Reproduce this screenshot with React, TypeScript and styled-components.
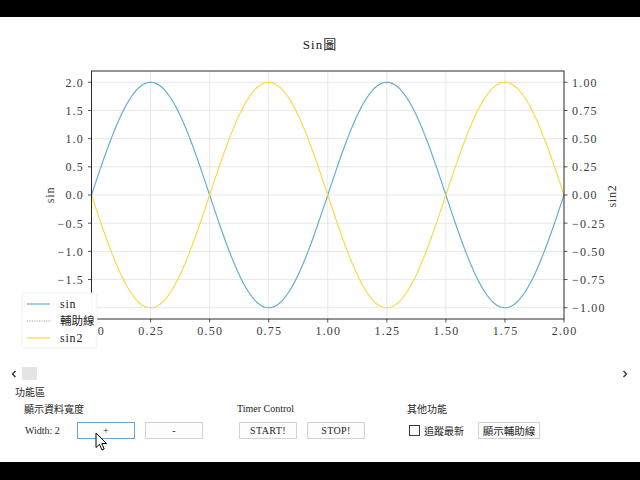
import React from "react";
import styled, { createGlobalStyle } from "styled-components";

const GlobalStyle = createGlobalStyle`
  html, body { margin: 0; padding: 0; background: #fff; }
  body { font-family: "Liberation Serif", "Noto Sans CJK TC", serif; }
`;

const Screen = styled.div`
  position: relative;
  width: 640px;
  height: 480px;
  display: flex;
  flex-direction: column;
  background: #fff;
  overflow: hidden;
`;

const BlackBar = styled.div<{ $h: number }>`
  height: ${(p) => p.$h}px;
  flex: none;
  background: #000;
`;

const ChartArea = styled.div`
  height: 349px;
  flex: none;
`;

const ScrollRow = styled.div`
  height: 16px;
  flex: none;
  display: flex;
  align-items: center;
  padding: 0 11px 0 10px;
`;

const ArrowBox = styled.div`
  width: 8px;
  height: 10px;
  display: flex;
  align-items: center;
  justify-content: center;
`;

const Thumb = styled.div`
  width: 15px;
  height: 13px;
  margin-left: 4px;
  margin-top: -1px;
  background: #e4e4e4;
`;

const Spacer = styled.div`
  flex: 1;
`;

const Panel = styled.div`
  flex: 1;
  padding: 3px 0 0 15px;
  color: #1e1e1e;
`;

const CjkText = styled.div`
  font-family: "Noto Sans CJK TC", sans-serif;
  font-size: 10px;
  line-height: 14px;
  height: 14px;
`;

const Groups = styled.div`
  display: flex;
  padding-left: 9px;
  margin-top: 3px;
`;

const Group = styled.div<{ $w?: number }>`
  width: ${(p) => (p.$w ? `${p.$w}px` : "auto")};
  flex: none;
  display: flex;
  flex-direction: column;
`;

const GroupTitleLatin = styled.div`
  font-family: "Liberation Serif", serif;
  font-size: 10px;
  line-height: 14px;
  height: 14px;
`;

const Row = styled.div<{ $indent?: number }>`
  display: flex;
  align-items: center;
  height: 17px;
  margin-top: 6px;
  padding-left: ${(p) => p.$indent ?? 0}px;
`;

const WidthLabel = styled.div`
  width: 52px;
  padding-left: 1px;
  font-family: "Liberation Serif", serif;
  font-size: 10px;
`;

const Button = styled.button<{ $w: number; $focused?: boolean; $cjk?: boolean }>`
  width: ${(p) => p.$w}px;
  height: 17px;
  margin: 0 10px 0 0;
  padding: 0;
  box-sizing: border-box;
  border: 1px solid ${(p) => (p.$focused ? "#62a6dc" : "#d2d2d2")};
  background: #fdfdfd;
  color: #1e1e1e;
  font-family: ${(p) =>
    p.$cjk ? `"Noto Sans CJK TC", sans-serif` : `"Liberation Serif", serif`};
  font-size: ${(p) => (p.$cjk ? 10.5 : 10)}px;
  line-height: 15px;
  letter-spacing: ${(p) => (p.$cjk ? 0 : 0.4)}px;
  display: flex;
  align-items: center;
  justify-content: center;
`;

const CheckBox = styled.div`
  width: 11px;
  height: 11px;
  box-sizing: border-box;
  border: 1px solid #3a3a3a;
  background: #fff;
  margin: 0 4px 0 2px;
`;

const CheckLabel = styled.span`
  font-family: "Noto Sans CJK TC", sans-serif;
  font-size: 10px;
  margin-right: 14px;
`;

const Cursor = styled.svg`
  position: absolute;
  left: 95px;
  top: 432px;
`;

// ---- chart geometry (page coordinates, svg offset by 17px) ----
const OFF = 17;
const X0 = 91.5;
const X1 = 564;
const YT = 71;
const YB = 319;
const YC = 195;
const px = (x: number) => X0 + (x * (X1 - X0)) / 2;
const pyL = (v: number) => YC - v * (124 / 2.2) - OFF;
const pyR = (v: number) => YC - v * (124 / 1.1) - OFF;
const Y = (y: number) => y - OFF;

const TICK_FONT = `"Liberation Serif", "Noto Sans CJK TC", serif`;
const fmtMinus = (s: string) => s.replace("-", "\u2212");

const LEG_X = 22;
const LEG_W = 75;

const Chart: React.FC = () => {
  const N = 400;
  const blue: string[] = [];
  const yellow: string[] = [];
  for (let i = 0; i <= N; i++) {
    const x = (2 * i) / N;
    const s = Math.sin(2 * Math.PI * x);
    blue.push(`${px(x).toFixed(2)},${pyL(2 * s).toFixed(2)}`);
    yellow.push(`${px(x).toFixed(2)},${pyR(-s).toFixed(2)}`);
  }
  const xTicks = [0, 0.25, 0.5, 0.75, 1, 1.25, 1.5, 1.75, 2];
  const yL = [2, 1.5, 1, 0.5, 0, -0.5, -1, -1.5, -2];
  const yR = [1, 0.75, 0.5, 0.25, 0, -0.25, -0.5, -0.75, -1];
  const tickColor = "#3a3a3a";
  return (
    <svg width={640} height={349} viewBox="0 0 640 349">
      <defs>
        <clipPath id="pastLegend">
          <rect x={LEG_X + LEG_W + 1} y={0} width={640} height={349} />
        </clipPath>
      </defs>
      <text
        x={320}
        y={Y(44)}
        dy="0.36em"
        textAnchor="middle"
        fontFamily={TICK_FONT}
        fontSize={13}
        letterSpacing={1}
        fill="#222"
      >
        Sin圖
      </text>
      {/* grid */}
      {xTicks.slice(1, -1).map((t) => (
        <line key={`gx${t}`} x1={px(t)} x2={px(t)} y1={Y(YT)} y2={Y(YB)} stroke="#e2e2e2" strokeWidth={0.8} />
      ))}
      {yL.map((t) => (
        <line key={`gy${t}`} x1={X0} x2={X1} y1={pyL(t)} y2={pyL(t)} stroke="#e2e2e2" strokeWidth={0.8} />
      ))}
      {/* curves */}
      <polyline points={blue.join(" ")} fill="none" stroke="#62aed4" strokeWidth={1.2} />
      <polyline points={yellow.join(" ")} fill="none" stroke="#fcd84c" strokeWidth={1.2} />
      {/* spines */}
      <rect x={X0} y={Y(YT)} width={X1 - X0} height={YB - YT} fill="none" stroke="#2a2a2a" strokeWidth={1} />
      {/* left ticks (the lowest one lies under the legend) */}
      {yL.map((t) => (
        <g key={`l${t}`}>
          <line x1={X0 - 3.5} x2={X0} y1={pyL(t)} y2={pyL(t)} stroke="#2a2a2a" strokeWidth={0.8} />
          {t > -2 && (
            <text
              x={84}
              y={pyL(t)}
              dy="0.36em"
              textAnchor="end"
              fontFamily={TICK_FONT}
              fontSize={12}
              letterSpacing={1.2}
              fill={tickColor}
            >
              {fmtMinus(t.toFixed(1))}
            </text>
          )}
        </g>
      ))}
      {/* right ticks */}
      {yR.map((t) => (
        <g key={`r${t}`}>
          <line x1={X1} x2={X1 + 3.5} y1={pyR(t)} y2={pyR(t)} stroke="#2a2a2a" strokeWidth={0.8} />
          <text
            x={572}
            y={pyR(t)}
            dy="0.36em"
            textAnchor="start"
            fontFamily={TICK_FONT}
            fontSize={12}
            letterSpacing={1.2}
            fill={tickColor}
          >
            {fmtMinus(t.toFixed(2))}
          </text>
        </g>
      ))}
      {/* x ticks */}
      {xTicks.map((t) => (
        <g key={`x${t}`}>
          <line x1={px(t)} x2={px(t)} y1={Y(YB)} y2={Y(YB + 3.5)} stroke="#2a2a2a" strokeWidth={0.8} />
          <text
            x={px(t) + 0.6}
            y={Y(331)}
            dy="0.36em"
            textAnchor="middle"
            fontFamily={TICK_FONT}
            fontSize={12}
            letterSpacing={1.2}
            fill={tickColor}
            clipPath={t === 0 ? "url(#pastLegend)" : undefined}
          >
            {t.toFixed(2)}
          </text>
        </g>
      ))}
      {/* axis labels */}
      <text
        transform={`translate(50 ${Y(195)}) rotate(-90)`}
        dy="0.36em"
        textAnchor="middle"
        fontFamily={TICK_FONT}
        fontSize={12}
        letterSpacing={0.8}
        fill={tickColor}
      >
        sin
      </text>
      <text
        transform={`translate(612 ${Y(196)}) rotate(-90)`}
        dy="0.36em"
        textAnchor="middle"
        fontFamily={TICK_FONT}
        fontSize={12}
        letterSpacing={0.8}
        fill={tickColor}
      >
        sin2
      </text>
      {/* legend */}
      <rect x={LEG_X} y={Y(293)} width={LEG_W} height={55} rx={2} fill="#fff" fillOpacity={0.97} stroke="#ececec" strokeWidth={0.8} />
      <line x1={27} x2={50} y1={Y(304)} y2={Y(304)} stroke="#62aed4" strokeWidth={1.2} />
      <line x1={27} x2={50} y1={Y(321)} y2={Y(321)} stroke="#8a8a8a" strokeWidth={0.8} strokeDasharray="1.2 1.2" />
      <line x1={27} x2={50} y1={Y(338)} y2={Y(338)} stroke="#fcd84c" strokeWidth={1.2} />
      <text x={60} y={Y(304)} dy="0.36em" fontFamily={TICK_FONT} fontSize={12} letterSpacing={0.8} fill="#222">sin</text>
      <text x={60} y={Y(321)} dy="0.36em" fontFamily={TICK_FONT} fontSize={11.5} fill="#222">輔助線</text>
      <text x={60} y={Y(338)} dy="0.36em" fontFamily={TICK_FONT} fontSize={12} letterSpacing={0.8} fill="#222">sin2</text>
    </svg>
  );
};

const Chevron: React.FC<{ dir: "left" | "right" }> = ({ dir }) => (
  <svg width={6} height={8} viewBox="0 0 6 8">
    <polyline
      points={dir === "left" ? "4.5,1 1.5,4 4.5,7" : "1.5,1 4.5,4 1.5,7"}
      fill="none"
      stroke="#333"
      strokeWidth={1.4}
    />
  </svg>
);

export default function App() {
  return (
    <>
      <GlobalStyle />
      <Screen>
        <BlackBar $h={17} />
        <ChartArea>
          <Chart />
        </ChartArea>
        <ScrollRow>
          <ArrowBox>
            <Chevron dir="left" />
          </ArrowBox>
          <Thumb />
          <Spacer />
          <ArrowBox>
            <Chevron dir="right" />
          </ArrowBox>
        </ScrollRow>
        <Panel>
          <CjkText>功能區</CjkText>
          <Groups>
            <Group $w={213}>
              <CjkText>顯示資料寬度</CjkText>
              <Row>
                <WidthLabel>Width: 2</WidthLabel>
                <Button $w={58} $focused>+</Button>
                <Button $w={58}>-</Button>
              </Row>
            </Group>
            <Group $w={170}>
              <GroupTitleLatin>Timer Control</GroupTitleLatin>
              <Row $indent={2}>
                <Button $w={58}>START!</Button>
                <Button $w={58}>STOP!</Button>
              </Row>
            </Group>
            <Group>
              <CjkText>其他功能</CjkText>
              <Row>
                <CheckBox />
                <CheckLabel>追蹤最新</CheckLabel>
                <Button $w={62} $cjk>顯示輔助線</Button>
              </Row>
            </Group>
          </Groups>
        </Panel>
        <BlackBar $h={18} />
        <Cursor width={13} height={20} viewBox="0 0 13 20">
          <path
            d="M1 1 L1 15.5 L4.5 12.3 L7 18 L9.2 17 L6.8 11.5 L11.5 11.5 Z"
            fill="#fff"
            stroke="#000"
            strokeWidth={1}
            strokeLinejoin="round"
          />
        </Cursor>
      </Screen>
    </>
  );
}
